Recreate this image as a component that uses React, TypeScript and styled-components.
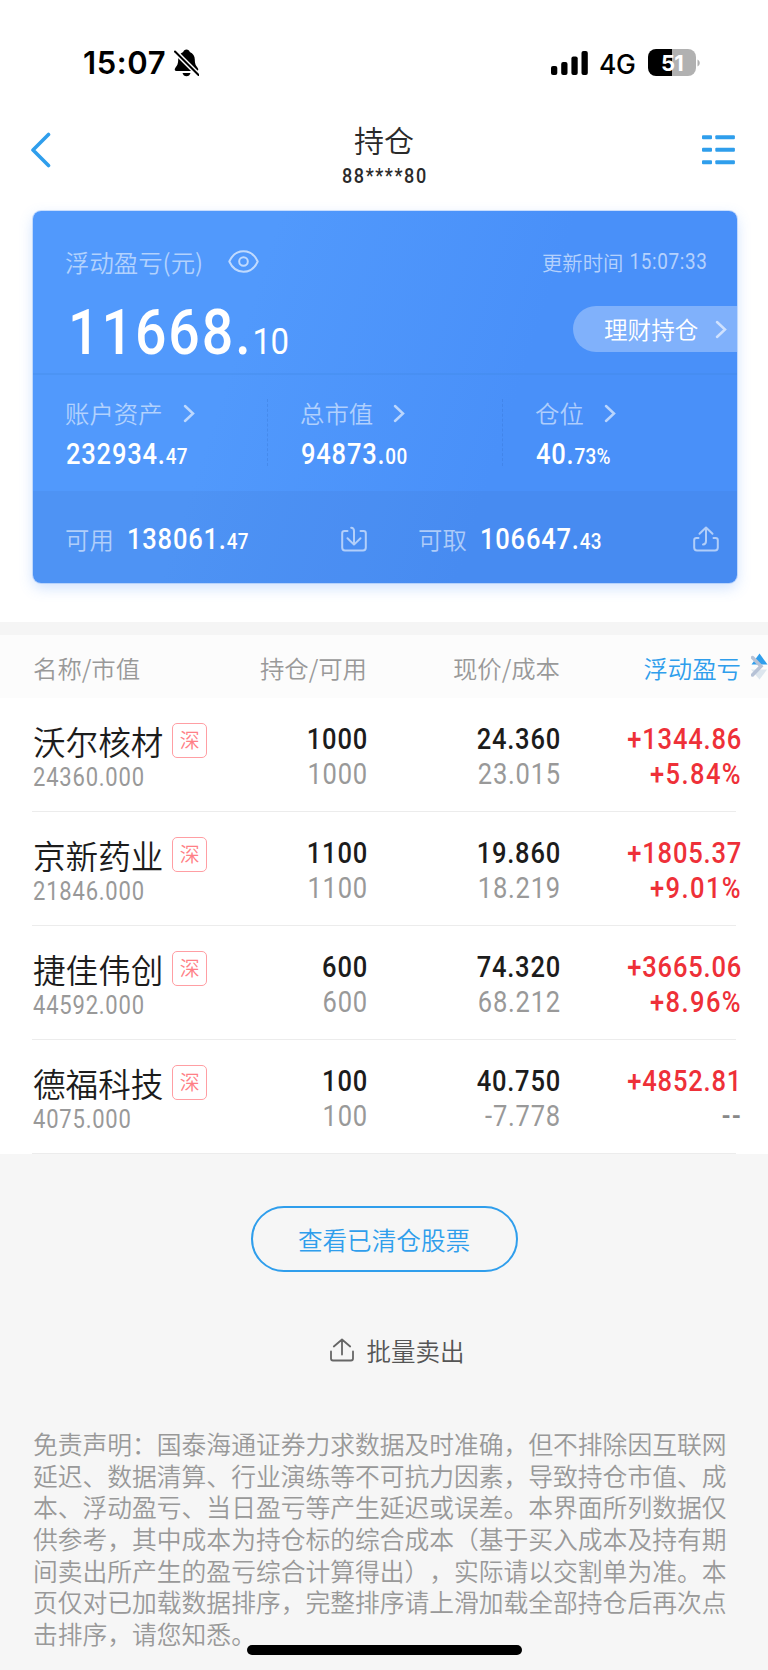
import React from 'react';
import styled, { createGlobalStyle, css } from 'styled-components';

const cjk = '"Noto Sans CJK SC", sans-serif';
const din = `Roboto, ${cjk}`;

const narrow = (origin: string) => css`
  transform: scaleX(0.88);
  transform-origin: ${origin} center;
`;

const Global = createGlobalStyle`
  * { box-sizing: border-box; }
  body { margin: 0; background: #f6f6f6; font-family: ${cjk}; font-weight: 350; }
`;

const Page = styled.main`
  width: 768px;
  height: 1670px;
  overflow: hidden;
  display: flex;
  flex-direction: column;
  background: #f6f6f6;
  white-space: nowrap;
  position: relative;
`;

const Top = styled.section`
  background: #fff;
  height: 622px;
  flex: none;
`;

const StatusBar = styled.div`
  height: 106px;
  padding: 19px 68px 0 83px;
  display: flex;
  align-items: center;
  font-family: Inter, sans-serif;
  color: #000;
`;

const Clock = styled.span`
  width: 91px;
  font-size: 31px;
  font-weight: 600;
  letter-spacing: 0.6px;
`;

const Network = styled.span`
  width: 49px;
  padding-left: 11px;
  font-size: 26.5px;
  font-weight: 500;
  letter-spacing: -0.4px;
  position: relative;
  top: 1px;
`;

const Battery = styled.div`
  width: 48px;
  height: 27px;
  margin-left: 11px;
  border-radius: 8px;
  background: linear-gradient(90deg, #000 51%, #b1b1b1 51%);
  color: #fff;
  font-size: 22px;
  font-weight: 700;
  line-height: 28px;
  text-align: center;
  letter-spacing: -0.8px;
`;

const Spacer = styled.div`
  flex: 1;
`;

const NavBar = styled.header`
  height: 105px;
  padding: 0 33px 0 30px;
  display: grid;
  grid-template-columns: 60px 1fr 60px;
  align-items: start;
  color: #2f9eec;
  & > svg { margin-top: 26px; }
  & > svg:last-child { justify-self: end; margin-top: 29px; }
`;

const Title = styled.h1`
  margin: 0;
  padding: 13px 0 0 3px;
  text-align: center;
  font-size: 30px;
  font-weight: 350;
  line-height: 40px;
  color: #2a2a2a;
`;

const Account = styled.div`
  font-family: ${din};
  font-weight: 500;
  font-size: 20.5px;
  line-height: 30px;
  padding: 2px 0 0 2px;
  letter-spacing: 1.8px;
  ${narrow('center')}
`;

const Card = styled.div`
  margin: 0 31px 0 33px;
  height: 372px;
  border-radius: 8px;
  overflow: hidden;
  background: linear-gradient(108deg, #5199fc 30%, #4990f9 66%);
  box-shadow: 0 5px 14px rgba(73, 144, 249, 0.26), 0 0 0 1px rgba(73, 144, 249, 0.25);
  color: #fff;
`;

const Profit = styled.div`
  height: 164px;
  padding-left: 32px;
  border-bottom: 2px solid rgba(60, 130, 220, 0.22);
`;

const ProfitHead = styled.div`
  height: 95px;
  padding: 6px 29px 0 0;
  display: flex;
  align-items: center;
  & > svg { margin-left: 25px; }
`;

const ProfitBody = styled.div`
  display: flex;
  justify-content: space-between;
  align-items: flex-start;
`;

const Label = styled.span`
  font-size: 24.4px;
  line-height: 36px;
  color: rgba(255, 255, 255, 0.56);
`;

const Time = styled.span`
  display: flex;
  align-items: center;
  font-size: 20.4px;
  line-height: 30px;
  color: rgba(255, 255, 255, 0.6);
`;

const Digits = styled.span`
  font-family: ${din};
  font-weight: 450;
  font-size: 21.5px;
  letter-spacing: 0.7px;
  margin-left: -4px;
  padding-top: 1px;
  ${narrow('right')}
`;

const Money = styled.div<{ $big?: boolean }>`
  font-family: ${din};
  font-weight: 500;
  font-size: ${p => (p.$big ? 63 : 29)}px;
  line-height: ${p => (p.$big ? 53 : 38)}px;
  letter-spacing: ${p => (p.$big ? 2.2 : 0.9)}px;
  margin-left: ${p => (p.$big ? 3 : 1)}px;
  ${narrow('left')}
  & > small {
    font-size: ${p => (p.$big ? 37.5 : 21.5)}px;
    font-weight: ${p => (p.$big ? 450 : 500)};
    letter-spacing: ${p => (p.$big ? -0.7 : 0.3)}px;
  }
`;

const Pill = styled.button`
  border: 0;
  width: 164px;
  height: 46px;
  padding: 0 10px 0 31px;
  border-radius: 23px 0 0 23px;
  background: rgba(255, 255, 255, 0.3);
  color: #fff;
  font: 350 23.6px/46px ${cjk};
  display: flex;
  align-items: center;
  justify-content: space-between;
`;

const Stats = styled.div`
  height: 116px;
  display: grid;
  grid-template-columns: 235px 235px 1fr;
`;

const Stat = styled.div`
  position: relative;
  padding: 20px 0 0 32px;
  &:not(:last-child)::after {
    content: '';
    position: absolute;
    right: 0;
    top: 24px;
    height: 67px;
    border-right: 1px dashed rgba(50, 110, 200, 0.3);
  }
`;

const StatHead = styled.div`
  display: flex;
  align-items: center;
  gap: 20px;
  height: 36px;
  margin-bottom: 4px;
`;

const Funds = styled.div`
  height: 92px;
  background: rgba(60, 110, 190, 0.13);
  padding: 4px 18px 0 32px;
  display: grid;
  grid-template-columns: 353px 1fr;
  align-items: center;
`;

const Fund = styled.div`
  display: flex;
  align-items: center;
  gap: 12px;
  & > svg { margin-left: auto; }
  &:first-child { padding-right: 51px; }
  & > ${Money} { padding-top: 2px; }
`;

const Band = styled.div`
  height: 13px;
  flex: none;
  background: #f5f5f5;
`;

const columns = '184px 150px 193px 181px';

const TableHead = styled.div`
  height: 63px;
  flex: none;
  background: #fcfcfc;
  padding: 1px 0 0 33px;
  display: grid;
  grid-template-columns: ${columns} 27px;
  align-items: center;
  font-size: 24.4px;
  color: #999;
`;

const Head = styled.div<{ $right?: boolean; $active?: boolean }>`
  text-align: ${p => (p.$right ? 'right' : 'left')};
  color: ${p => (p.$active ? '#2f9eec' : 'inherit')};
`;

const Rows = styled.div`
  background: #fff;
  height: 456px;
  flex: none;
`;

const Row = styled.div`
  height: 114px;
  margin: 0 32px;
  padding: 24px 0 0 1px;
  border-bottom: 1px solid #ececec;
  display: grid;
  grid-template-columns: ${columns};
`;

const NameLine = styled.div`
  display: flex;
  align-items: center;
  gap: 9px;
  height: 37px;
  font-size: 32.6px;
  line-height: 36px;
  color: #1c1c1c;
`;

const Market = styled.span`
  width: 35px;
  height: 35px;
  flex: none;
  border: 1.5px solid #ff9ea3;
  border-radius: 5px;
  font-size: 20px;
  line-height: 32px;
  text-align: center;
  color: #ff7f86;
`;

const Worth = styled.div`
  font-family: ${din};
  font-weight: 450;
  font-size: 25px;
  line-height: 30px;
  letter-spacing: 0.9px;
  margin-top: 4px;
  color: #999;
  ${narrow('left')}
`;

const Figure = styled.div<{ $color: string; $medium?: boolean; $wide?: boolean }>`
  font-family: ${din};
  font-weight: ${p => (p.$medium ? 500 : 450)};
  font-size: 29px;
  line-height: 35px;
  letter-spacing: ${p => (p.$wide ? 1.6 : 0.9)}px;
  margin-right: -1px;
  text-align: right;
  color: ${p => p.$color};
  ${narrow('right')}
`;

const Footer = styled.section`
  flex: 1;
  display: flex;
  flex-direction: column;
  align-items: center;
`;

const Cleared = styled.button`
  margin-top: 52px;
  width: 267px;
  height: 66px;
  padding: 0;
  border: 2px solid #2f9eec;
  border-radius: 33px;
  background: transparent;
  color: #2f9eec;
  font: 350 24.6px/56px ${cjk};
`;

const Batch = styled.div`
  margin: 58px 0 0 26px;
  height: 40px;
  display: flex;
  align-items: center;
  gap: 13px;
  font-size: 24.5px;
  color: #555;
`;

const Disclaimer = styled.p`
  margin: 58px 0 0;
  width: 702px;
  font-size: 24.78px;
  line-height: 31.67px;
  color: #999;
  text-spacing-trim: space-all;
`;

const HomeIndicator = styled.div`
  position: absolute;
  left: 247px;
  top: 1645px;
  width: 275px;
  height: 10px;
  border-radius: 5px;
  background: #000;
`;

const Bell = () => (
  <svg width="25" height="28" viewBox="0 0 25 28">
    <path d="M12.5 0.5c1.7 0 2.9 1 3.3 2.4 3.2 1.2 5 4.100 5 7.600 0 4.600 1.200 6.300 2.900 8.400 1 1.300.7 3.100-1.200 3.100H2.500C.6 22 .3 20.200 1.300 18.900 3 16.800 4.200 15.100 4.200 10.500c0-3.500 1.800-6.400 5-7.600C9.600 1.500 10.800.5 12.500.5z" />
    <path d="M8.500 24h8c-.5 2-2 3.300-4 3.300s-3.500-1.300-4-3.300z" />
    <path d="M1 2.500 24.500 26" stroke="#fff" strokeWidth="5" />
    <path d="M1 2.500 24.500 26" stroke="#000" strokeWidth="2" strokeLinecap="round" />
  </svg>
);

const Signal = () => (
  <svg width="37" height="24" viewBox="0 0 37 24">
    <rect x="0" y="15" width="6.300" height="9" rx="2" />
    <rect x="10.200" y="11" width="6.300" height="13" rx="2" />
    <rect x="20.400" y="5.500" width="6.300" height="18.500" rx="2" />
    <rect x="30.500" y="0" width="6.300" height="24" rx="2" />
  </svg>
);

const Nub = () => (
  <svg width="4" height="8" viewBox="0 0 4 8">
    <path d="M1.500 0.500c3 1.500 3 5.500 0 7z" fill="#b1b1b1" />
  </svg>
);

const Back = () => (
  <svg width="22" height="36" viewBox="0 0 22 36" fill="none" stroke="currentColor" strokeWidth="3.600" strokeLinecap="round" strokeLinejoin="round">
    <path d="M18.500 2.500 3 18l15.500 15.500" />
  </svg>
);

const List = () => (
  <svg width="33" height="30" viewBox="0 0 33 30" fill="currentColor">
    {[0.2, 12.8, 25.2].map(y => (
      <g key={y}>
        <rect x="0" y={y} width="10" height="4" rx="1" />
        <rect x="13.300" y={y} width="19.600" height="4" rx="1" />
      </g>
    ))}
  </svg>
);

const Chevron = () => (
  <svg width="12" height="19" viewBox="0 0 12 19" fill="none" stroke="#fff" strokeOpacity=".62" strokeWidth="2.500" strokeLinecap="round">
    <path d="m2 2 8 7.500L2 17" />
  </svg>
);

const Eye = () => (
  <svg width="31" height="23" viewBox="0 0 31 23" fill="none" stroke="#fff" strokeOpacity=".64" strokeWidth="2">
    <path d="M1.300 11.500C4 5.500 9 1.300 15.500 1.300S27 5.500 29.700 11.500C27 17.500 22 21.700 15.500 21.700S4 17.500 1.300 11.500z" strokeLinejoin="round" />
    <circle cx="15.500" cy="11.500" r="4.300" />
  </svg>
);

const TransferIn = () => (
  <svg width="26" height="26" viewBox="0 0 26 26" fill="none" stroke="#fff" strokeOpacity=".58" strokeWidth="2" strokeLinecap="round" strokeLinejoin="round">
    <path d="M6.500 5H3.500Q1.200 5 1.200 7.300V21.500Q1.200 24.500 4 24.500H22Q24.800 24.500 24.800 21.500V7.300Q24.800 5 22.500 5H19.500" />
    <path d="M10.200 1.700Q13 1.800 13 5V18.500M6.500 12.300 13 18.600l6.500-6.300" />
  </svg>
);

const TransferOut = () => (
  <svg width="26" height="26" viewBox="0 0 26 26" fill="none" stroke="#fff" strokeOpacity=".58" strokeWidth="2" strokeLinecap="round" strokeLinejoin="round">
    <path d="M5.500 12H3.500Q1.200 12 1.200 14.300V21.500Q1.200 24.500 4 24.500H22Q24.800 24.500 24.800 21.500V14.300Q24.800 12 22.500 12H20.500" />
    <path d="M10 18.500Q13 18.400 13 15V1.800M6.500 7.800 13 1.500l6.500 6.300" />
  </svg>
);

const Export = () => (
  <svg width="24" height="24" viewBox="0 0 24 24" fill="none" stroke="#666" strokeWidth="1.800" strokeLinecap="round" strokeLinejoin="round">
    <path d="M1 13.500V20.500Q1 22.500 3 22.500H21Q23 22.500 23 20.500V13.500M12 16.500V1.500M3.800 8.500 12 1.500l8.200 7" />
  </svg>
);

const SortIcon = styled.svg`
  margin-left: 10px;
`;

const Sort = () => (
  <SortIcon width="17" height="28" viewBox="0 0 17 28">
    <path d="M0 16.500h16L8.500 26.500z" fill="#dde6ee" />
    <path d="M0.500 11.500 8.500 0.500 16.500 11.500z" fill="#2f9eec" />
    <path d="M1.500 4.500 10 13.200 1.500 22" fill="none" stroke="#b6c2d6" strokeWidth="3.500" strokeLinecap="round" />
  </SortIcon>
);

const stats = [
  { label: '账户资产', whole: '232934.', part: '47' },
  { label: '总市值', whole: '94873.', part: '00' },
  { label: '仓位', whole: '40.', part: '73%' },
];

const holdings = [
  { name: '沃尔核材', worth: '24360.000', qty: '1000', price: '24.360', cost: '23.015', gain: '+1344.86', rate: '+5.84%' },
  { name: '京新药业', worth: '21846.000', qty: '1100', price: '19.860', cost: '18.219', gain: '+1805.37', rate: '+9.01%' },
  { name: '捷佳伟创', worth: '44592.000', qty: '600', price: '74.320', cost: '68.212', gain: '+3665.06', rate: '+8.96%' },
  { name: '德福科技', worth: '4075.000', qty: '100', price: '40.750', cost: '-7.778', gain: '+4852.81', rate: '--' },
];

const disclaimer = [
  '免责声明：国泰海通证券力求数据及时准确，但不排除因互联网',
  '延迟、数据清算、行业演练等不可抗力因素，导致持仓市值、成',
  '本、浮动盈亏、当日盈亏等产生延迟或误差。本界面所列数据仅',
  '供参考，其中成本为持仓标的综合成本（基于买入成本及持有期',
  '间卖出所产生的盈亏综合计算得出），实际请以交割单为准。本',
  '页仅对已加载数据排序，完整排序请上滑加载全部持仓后再次点',
  '击排序，请您知悉。',
];

export default function App() {
  return (
    <Page>
      <Global />
      <Top>
        <StatusBar>
          <Clock>15:07</Clock>
          <Bell />
          <Spacer />
          <Signal />
          <Network>4G</Network>
          <Battery>51</Battery>
          <Nub />
        </StatusBar>
        <NavBar>
          <Back />
          <Title>
            持仓
            <Account>88****80</Account>
          </Title>
          <List />
        </NavBar>
        <Card>
          <Profit>
            <ProfitHead>
              <Label>浮动盈亏(元)</Label>
              <Eye />
              <Spacer />
              <Time>更新时间<Digits>15:07:33</Digits></Time>
            </ProfitHead>
            <ProfitBody>
              <Money $big>11668.<small>10</small></Money>
              <Pill>理财持仓<Chevron /></Pill>
            </ProfitBody>
          </Profit>
          <Stats>
            {stats.map(s => (
              <Stat key={s.label}>
                <StatHead><Label>{s.label}</Label><Chevron /></StatHead>
                <Money>{s.whole}<small>{s.part}</small></Money>
              </Stat>
            ))}
          </Stats>
          <Funds>
            <Fund>
              <Label>可用</Label>
              <Money>138061.<small>47</small></Money>
              <TransferIn />
            </Fund>
            <Fund>
              <Label>可取</Label>
              <Money>106647.<small>43</small></Money>
              <TransferOut />
            </Fund>
          </Funds>
        </Card>
      </Top>
      <Band />
      <TableHead>
        <Head>名称/市值</Head>
        <Head $right>持仓/可用</Head>
        <Head $right>现价/成本</Head>
        <Head $right $active>浮动盈亏</Head>
        <Sort />
      </TableHead>
      <Rows>
        {holdings.map(h => (
          <Row key={h.name}>
            <div>
              <NameLine>{h.name}<Market>深</Market></NameLine>
              <Worth>{h.worth}</Worth>
            </div>
            <div>
              <Figure $color="#1c1c1c" $medium>{h.qty}</Figure>
              <Figure $color="#999">{h.qty}</Figure>
            </div>
            <div>
              <Figure $color="#1c1c1c" $medium>{h.price}</Figure>
              <Figure $color="#999">{h.cost}</Figure>
            </div>
            <div>
              <Figure $color="#ee3038" $medium>{h.gain}</Figure>
              <Figure $color={h.rate === '--' ? '#888' : '#ee3038'} $medium $wide>{h.rate}</Figure>
            </div>
          </Row>
        ))}
      </Rows>
      <Footer>
        <Cleared>查看已清仓股票</Cleared>
        <Batch><Export />批量卖出</Batch>
        <Disclaimer>
          {disclaimer.map(line => (
            <React.Fragment key={line}>{line}<br /></React.Fragment>
          ))}
        </Disclaimer>
      </Footer>
      <HomeIndicator />
    </Page>
  );
}
